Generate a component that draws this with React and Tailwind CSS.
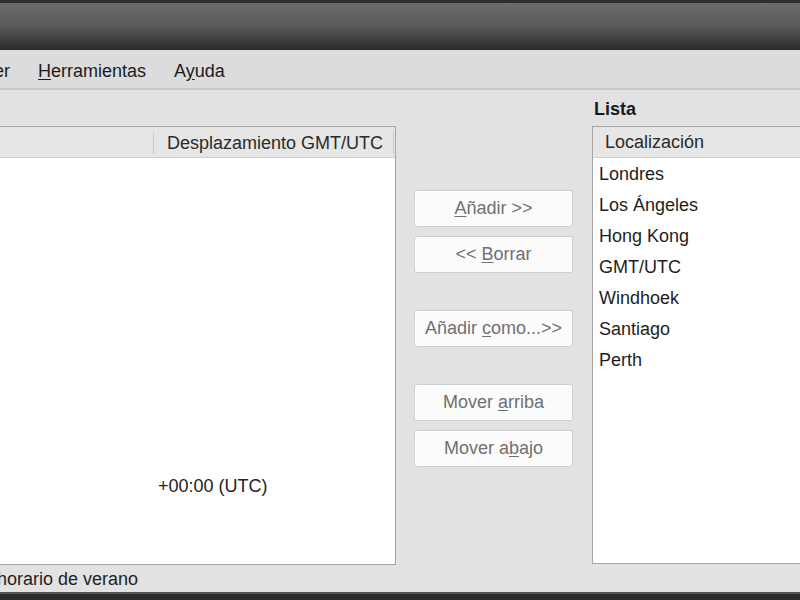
import React from 'react';

const font = { fontFamily: '"Liberation Sans", Arial, sans-serif' };

function U({ children }) {
  return <span className="underline underline-offset-2">{children}</span>;
}

function Btn({ children, className = '' }) {
  return (
    <button
      disabled
      className={`h-[37px] w-[159px] rounded-[3px] border border-[#cfcfcf] bg-[#fbfbfb] text-[18px] text-[#707070] shadow-[inset_0_0_0_1px_#ffffff] ${className}`}
    >
      {children}
    </button>
  );
}

export default function App() {
  const places = ['Londres', 'Los Ángeles', 'Hong Kong', 'GMT/UTC', 'Windhoek', 'Santiago', 'Perth'];

  return (
    <div style={font} className="flex h-[600px] w-[800px] flex-col overflow-hidden bg-[#e2e2e2] text-[#1c1c1c]">
      {/* title bar */}
      <div className="h-[50px] shrink-0 border-t-[3px] border-[#2f2f2f] bg-gradient-to-b from-[#6c6c6c] via-[#5a5a5a] to-[#2a2a2a]" />

      {/* menu */}
      <div className="flex h-[40px] shrink-0 items-center border-b-2 border-[#c9c9c9] bg-[#dcdcdc] pt-[5px] text-[18px]">
        <span className="-ml-[17px] shrink-0">Ver</span>
        <span className="ml-[28px] shrink-0"><U>H</U>erramientas</span>
        <span className="ml-[28px] shrink-0">A<U>y</U>uda</span>
      </div>

      {/* body */}
      <div className="flex h-[474px] shrink-0">
        {/* left list */}
        <div className="-ml-[24px] mt-[36px] flex h-[439px] w-[420px] shrink-0 flex-col border border-[#a6a6a6] bg-white">
          <div className="flex h-[31px] shrink-0 items-center border-b border-[#cfcfcf] bg-[#e6e6e6] pt-[2px] text-[18px] text-[#2a2a2a]">
            <div className="h-[22px] w-[177px] shrink-0 border-r border-[#c8c8c8]" />
            <div className="w-[240px] shrink-0 border-r border-[#c8c8c8] pl-[13px] leading-[22px]">Desplazamiento GMT/UTC</div>
          </div>
          <div className="relative flex-1">
            <div className="absolute left-[181px] top-[315px] text-[18px] text-[#222]">+00:00 (UTC)</div>
          </div>
        </div>

        {/* buttons */}
        <div className="ml-[18px] flex w-[159px] shrink-0 flex-col pt-[100px]">
          <Btn><U>A</U>ñadir &gt;&gt;</Btn>
          <Btn className="mt-[9px]">&lt;&lt; <U>B</U>orrar</Btn>
          <Btn className="mt-[37px]">Añadir <U>c</U>omo...&gt;&gt;</Btn>
          <Btn className="mt-[37px]">Mover <U>a</U>rriba</Btn>
          <Btn className="mt-[9px]">Mover a<U>b</U>ajo</Btn>
        </div>

        {/* right list */}
        <div className="ml-[19px] flex shrink-0 flex-col">
          <div className="flex h-[36px] items-center pl-[2px] pt-[3px] text-[18px] font-bold text-[#1a1a1a]">Lista</div>
          <div className="flex h-[439px] w-[240px] flex-col border border-[#a6a6a6] bg-white">
            <div className="flex h-[31px] shrink-0 items-center border-b border-[#cfcfcf] bg-[#e6e6e6] pl-[12px] pt-[2px] text-[18px] text-[#2a2a2a]">
              Localización
            </div>
            <div className="flex flex-col pl-[6px] pt-[1px] text-[18px] text-[#1e1e1e]">
              {places.map((p) => (
                <div key={p} className="h-[31px] leading-[31px]">{p}</div>
              ))}
            </div>
          </div>
        </div>
      </div>

      {/* status */}
      <div className="flex h-[28px] shrink-0 items-center pt-[3px] text-[18px] text-[#222]">
        <span className="-ml-[3px] shrink-0">horario de verano</span>
      </div>

      {/* bottom edge */}
      <div className="flex-1 border-t-2 border-[#555] bg-[#2c2c2c]" />
    </div>
  );
}
